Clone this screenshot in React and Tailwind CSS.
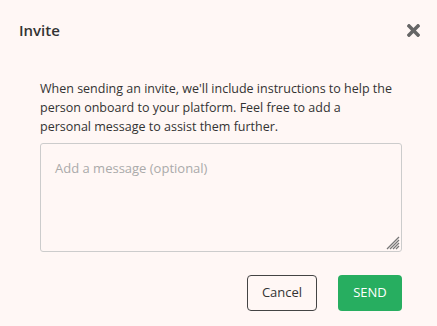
import React from "react";
import { FaTimes } from "react-icons/fa";

export default function App() {
  return (
    <div className="w-[437px] h-[326px] bg-[#fff7f5] text-[#333] overflow-hidden" style={{ fontFamily: '"Open Sans", "Noto Sans", sans-serif' }}>
      <div className="flex items-center justify-between pl-[19px] pr-[14px] pt-[17px] h-[44px]">
        <div className="text-[15px] font-semibold text-[#333]">Invite</div>
        <FaTimes className="text-[#666] w-[19px] h-[19px]" />
      </div>
      <div className="pl-[40px] pt-[35px] w-[402px]">
        <p className="text-[12.5px] leading-[19px] text-[#333] whitespace-nowrap">
          When sending an invite, we'll include instructions to help the<br />
          person onboard to your platform. Feel free to add a<br />
          personal message to assist them further.
        </p>
        <div className="relative mt-[7px]">
          <textarea
            placeholder="Add a message (optional)"
            className="block w-[362px] h-[109px] resize-none rounded-[3px] border border-[#ccc] bg-transparent px-[14px] py-[15px] text-[13px] text-[#333] placeholder:text-[#aaa] outline-none"
          />
          <svg className="absolute right-[2px] bottom-[2px] pointer-events-none" width="14" height="14" viewBox="0 0 14 14">
            <g stroke="#777" strokeWidth="1.3">
              <line x1="1" y1="13" x2="13" y2="1" />
              <line x1="4" y1="13" x2="13" y2="4" />
              <line x1="7" y1="13" x2="13" y2="7" />
              <line x1="10" y1="13" x2="13" y2="10" />
            </g>
          </svg>
        </div>
        <div className="flex justify-end gap-[21px] mt-[23px]">
          <button className="w-[70px] h-[36px] rounded-[4px] border border-[#444] text-[13px] text-[#333]">Cancel</button>
          <button className="w-[64px] h-[36px] rounded-[4px] bg-[#27ae60] text-[13px] text-white">SEND</button>
        </div>
      </div>
    </div>
  );
}
